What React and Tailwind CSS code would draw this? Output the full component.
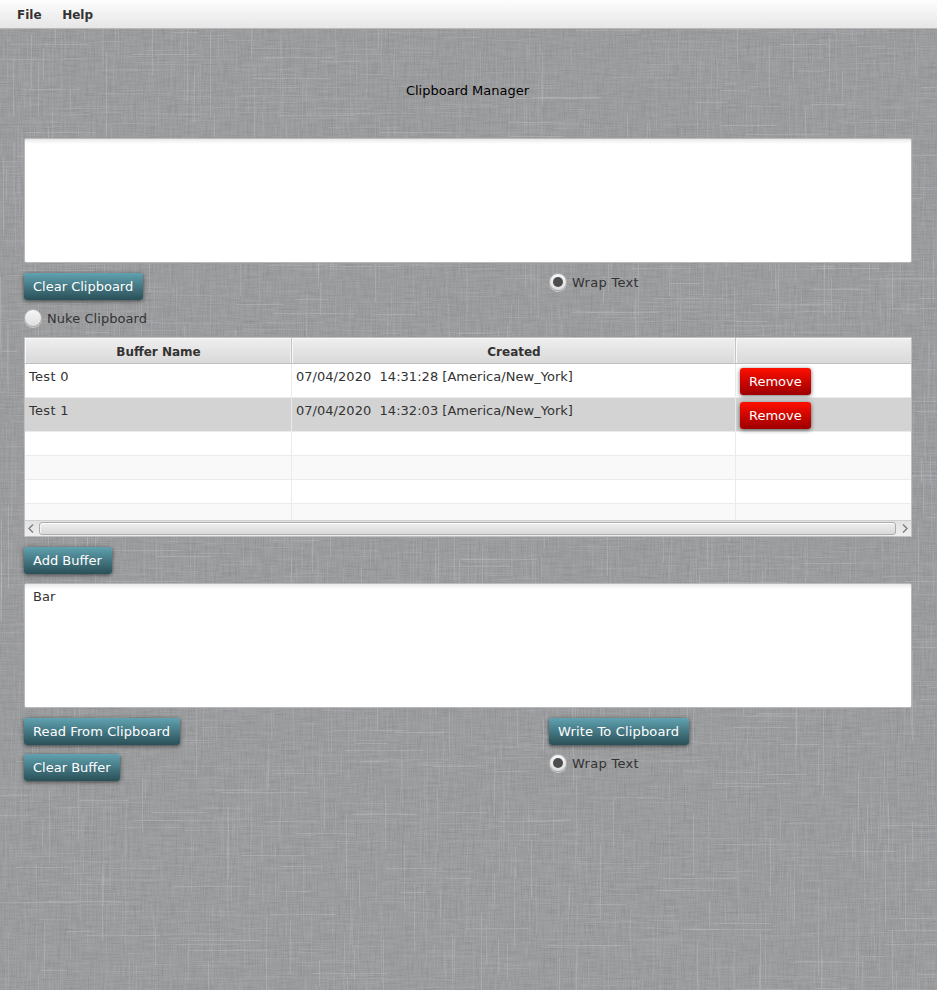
import React from "react";

const makeRandom = (seed) => () => {
  seed = (seed * 1664525 + 1013904223) % 4294967296;
  return seed / 4294967296;
};

// Builds one path of single-pixel threads, half horizontal and half vertical.
const threads = (seed, count, minLength, maxLength) => {
  const random = makeRandom(seed);
  let d = "";
  for (let i = 0; i < count; i++) {
    const x = Math.floor(random() * 960) - 20;
    const y = Math.floor(random() * 990);
    const length = Math.floor(minLength + random() * (maxLength - minLength));
    d += i % 2 ? `M${x} ${y}.5h${length}` : `M${x}.5 ${y}v${length}`;
  }
  return d;
};

const LIGHT_LAYERS = [7, 81, 143, 260].map((seed) => threads(seed, 650, 20, 80));
const BRIGHT_LAYERS = [21, 333].map((seed) => threads(seed, 260, 25, 90));
const DARK = threads(55, 2600, 6, 40);

function Linen() {
  return (
    <svg className="pointer-events-none absolute inset-0 h-[990px] w-[937px]" viewBox="0 0 937 990" aria-hidden="true">
      <filter id="weft" x="0" y="0" width="100%" height="100%" colorInterpolationFilters="sRGB">
        <feTurbulence type="fractalNoise" baseFrequency="0.05 0.85" numOctaves="2" seed="3" />
        <feColorMatrix values="0 0 0 0 0.36  0 0 0 0 0.37  0 0 0 0 0.38  0.32 0 0 0 -0.12" />
      </filter>
      <filter id="warp" x="0" y="0" width="100%" height="100%" colorInterpolationFilters="sRGB">
        <feTurbulence type="fractalNoise" baseFrequency="0.85 0.05" numOctaves="2" seed="9" />
        <feColorMatrix values="0 0 0 0 0.36  0 0 0 0 0.37  0 0 0 0 0.38  0.32 0 0 0 -0.12" />
      </filter>
      <rect width="937" height="990" fill="#a0a1a3" />
      <rect width="937" height="990" filter="url(#weft)" />
      <rect width="937" height="990" filter="url(#warp)" />
      <g fill="none" shapeRendering="crispEdges">
        <path d={DARK} stroke="#747678" strokeOpacity="0.1" />
        {LIGHT_LAYERS.map((d, i) => (
          <path key={i} d={d} stroke="#c2c4c6" strokeOpacity="0.18" />
        ))}
        {BRIGHT_LAYERS.map((d, i) => (
          <path key={i} d={d} stroke="#ced0d2" strokeOpacity="0.26" />
        ))}
      </g>
    </svg>
  );
}

function Button({ children, danger = false, className = "" }) {
  const color = danger
    ? "bg-linear-to-b from-[#ff1000] to-[#9d0000]"
    : "bg-linear-to-b from-[#61a2b1] to-[#2a5058]";
  return (
    <button
      className={`block h-[27px] rounded-[3px] pl-[9px] text-left leading-[27px] whitespace-nowrap text-white shadow-[0_1px_4px_rgba(0,0,0,0.6)] ${color} ${className}`}
    >
      {children}
    </button>
  );
}

function Radio({ children, checked = false, className = "" }) {
  return (
    <label className={`flex h-5 items-start gap-[5px] text-[#333] ${className}`}>
      <span className="flex size-[18px] shrink-0 items-center justify-center rounded-full border border-[#b0b0b0] bg-linear-to-b from-[#f6f6f6] to-[#dedede] shadow-[0_1px_0_rgba(235,235,235,0.6)]">
        {checked && <span className="size-[10px] rounded-full bg-[#4d4d4d]" />}
      </span>
      <span className="leading-5">{children}</span>
    </label>
  );
}

function TextBox({ children = "" }) {
  return (
    <div className="h-[125px] rounded-[2px] border border-[#b9b9b9] bg-linear-to-b from-[#e9e9e9] to-white to-[5px] px-2 py-1 leading-[17px] text-[#333]">
      {children}
    </div>
  );
}

const COLUMNS = "grid grid-cols-[267px_444px_175px]";

const BUFFERS = [
  { name: "Test 0", created: "07/04/2020  14:31:28 [America/New_York]", row: "bg-white" },
  { name: "Test 1", created: "07/04/2020  14:32:03 [America/New_York]", row: "bg-[#d3d3d3]" },
];

const EMPTY_ROWS = ["h-6 bg-white", "h-6 bg-[#f9f9f9]", "h-6 bg-white", "h-4 bg-[#f9f9f9]"];

const HEADER_CELL =
  "h-[25px] border-r border-[#c4c4c4] pt-px pl-px text-center text-[12px] font-bold leading-[26px] shadow-[inset_1px_1px_0_#f8f8f8,inset_-1px_0_0_#efefef]";

function BufferTable() {
  return (
    <div className="h-[200px] border border-[#c0c0c0] text-[#333]">
      <div className={`${COLUMNS} h-[26px] border-b border-[#c0c0c0] bg-linear-to-b from-[#efefef] to-[#d9d9d9]`}>
        <div className={HEADER_CELL}>Buffer Name</div>
        <div className={HEADER_CELL}>Created</div>
        <div className="shadow-[inset_1px_1px_0_#f8f8f8]" />
      </div>
      {BUFFERS.map((b) => (
        <div key={b.name} className={`${COLUMNS} h-[34px] border-b border-[#ebebeb] ${b.row}`}>
          <div className="border-r border-[#ebebeb] pt-1 pl-1 leading-[17px] tracking-[0.3px]">{b.name}</div>
          <div className="border-r border-[#ebebeb] pt-1 pl-1 leading-[17px] tracking-[0.03px] whitespace-pre">{b.created}</div>
          <div className="pt-1 pl-1">
            <Button danger className="w-[71px]">Remove</Button>
          </div>
        </div>
      ))}
      {EMPTY_ROWS.map((row, i) => (
        <div key={i} className={`${COLUMNS} ${row} ${i < 3 ? "border-b border-[#ebebeb]" : ""}`}>
          <div className="border-r border-[#ebebeb]" />
          <div className="border-r border-[#ebebeb]" />
        </div>
      ))}
      <div className="flex h-4 items-center border-t border-[#cfcfcf] bg-linear-to-b from-[#e2e2e2] to-[#eeeeee]">
        <svg className="h-[13px] w-[14px] shrink-0" viewBox="0 0 14 13" fill="none" stroke="#808080" strokeWidth="1.5">
          <path d="M8 2.5 4 6.5l4 4" />
        </svg>
        <div className="h-[13px] flex-1 rounded-[3px] border border-[#acacac] bg-linear-to-b from-[#eeeeee] to-[#d8d8d8] shadow-[inset_0_1px_0_#fff,inset_1px_0_0_#f5f5f5]" />
        <svg className="h-[13px] w-[15px] shrink-0" viewBox="0 0 15 13" fill="none" stroke="#808080" strokeWidth="1.5">
          <path d="m7 2.5 4 4-4 4" />
        </svg>
      </div>
    </div>
  );
}

export default function App() {
  return (
    <div className="relative h-[990px] w-[937px] overflow-hidden bg-[#9c9d9f] text-[13px] [font-family:'DejaVu_Sans',sans-serif]">
      <Linen />
      <div className="relative">
        <nav className="flex h-[29px] gap-[20.6px] border-b border-[#b8b8b8] bg-linear-to-b from-[#fdfdfd] to-[#e6e6e6] pt-px pl-[17px] text-[12px] leading-[29px] font-bold text-[#333]">
          <span>File</span>
          <span>Help</span>
        </nav>
        <main className="pr-[25px] pl-6">
          <h1 className="flex h-[109px] items-center justify-center pt-[14px] pr-px text-black">Clipboard Manager</h1>
          <TextBox />
          <div className="grid h-[46px] grid-cols-[525px_1fr] pt-[10px]">
            <Button className="w-[119px]">Clear Clipboard</Button>
            <Radio checked className="tracking-[0.3px]">Wrap Text</Radio>
          </div>
          <div className="h-7">
            <Radio className="tracking-[0.06px]">Nuke Clipboard</Radio>
          </div>
          <BufferTable />
          <div className="h-[46px] pt-[10px]">
            <Button className="w-[88px]">Add Buffer</Button>
          </div>
          <TextBox>Bar</TextBox>
          <div className="grid grid-cols-[525px_1fr] gap-y-[9px] pt-[10px]">
            <Button className="w-[156px] tracking-[0.1px]">Read From Clipboard</Button>
            <Button className="w-[140px] tracking-[0.16px]">Write To Clipboard</Button>
            <Button className="w-[96px]">Clear Buffer</Button>
            <Radio checked className="tracking-[0.3px]">Wrap Text</Radio>
          </div>
        </main>
      </div>
    </div>
  );
}
